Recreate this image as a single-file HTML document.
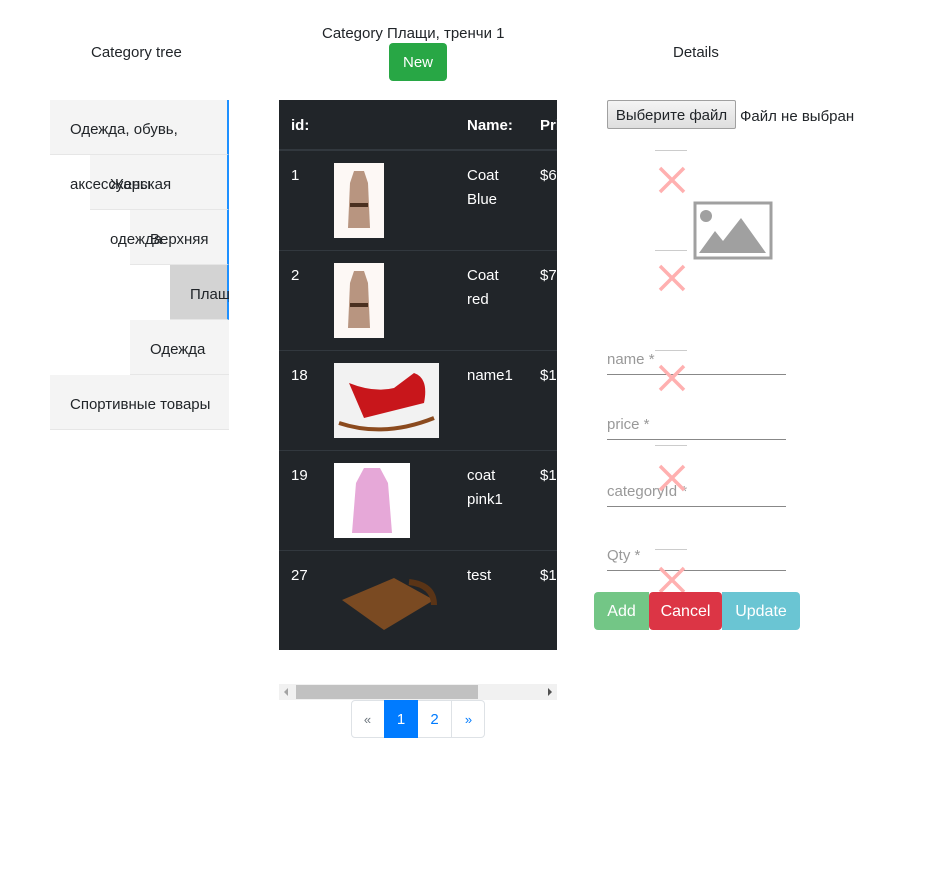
<!DOCTYPE html>
<html><head><meta charset="utf-8"><style>
*{box-sizing:border-box;margin:0;padding:0}
body{width:929px;height:888px;background:#fff;font-family:"Liberation Sans","Noto Sans CJK SC",sans-serif;color:#212529;position:relative;overflow:hidden;font-size:15px}
.a{position:absolute}
.t{position:absolute;background:#f4f4f4;border-bottom:1px solid #e6e6e6;height:55px;right:700px}
.txt{position:absolute;font-size:15px;white-space:nowrap}
.w{color:#fff;font-size:15px;position:absolute;line-height:24px}
.ln{position:absolute;left:655px;width:32px;height:1px;background:#ccc}
.inp{position:absolute;left:607px;width:179px;border-bottom:1px solid #888;color:#999;font-size:15px;height:26px;padding-top:2px}
</style></head><body>
<div class="txt" style="left:91px;top:44px">Category tree</div>
<div class="txt" style="left:322px;top:25px">Category Плащи, тренчи 1</div>
<div class="a" style="left:389px;top:43px;width:58px;height:38px;background:#28a745;border-radius:4px;color:#fff;text-align:center;line-height:40px;font-size:15px">New</div>
<div class="txt" style="left:673px;top:44px">Details</div>

<div class="t" style="left:50px;top:100px;border-right:2px solid #1e90ff"></div>
<div class="t" style="left:90px;top:155px;border-right:2px solid #1e90ff"></div>
<div class="t" style="left:130px;top:210px;border-right:2px solid #1e90ff"></div>
<div class="t" style="left:170px;top:265px;background:#d3d3d3;border-right:2px solid #1e90ff"></div>
<div class="t" style="left:130px;top:320px"></div>
<div class="t" style="left:50px;top:375px"></div>
<div class="a" style="left:50px;top:100px;width:179px;height:330px;overflow:hidden">
<div class="txt" style="left:20px;top:21px">Одежда, обувь,</div>
<div class="txt" style="left:20px;top:76px">аксессуары</div>
<div class="txt" style="left:60px;top:76px">Женская</div>
<div class="txt" style="left:60px;top:131px">одежда</div>
<div class="txt" style="left:100px;top:131px">Верхняя</div>
<div class="txt" style="left:140px;top:186px">Плащи</div>
<div class="txt" style="left:100px;top:241px">Одежда</div>
<div class="txt" style="left:20px;top:296px">Спортивные товары</div>
</div>

<div class="a" style="left:279px;top:100px;width:278px;height:550px;background:#212529;overflow:hidden">
<div class="w" style="left:12px;top:14px;font-weight:bold">id:</div>
<div class="w" style="left:188px;top:14px;font-weight:bold">Name:</div>
<div class="w" style="left:261px;top:14px;font-weight:bold">Price</div>
<div class="a" style="left:0;top:49px;width:278px;height:2px;background:#32383e"></div>
<div class="a" style="left:0;top:150px;width:278px;height:1px;background:#32383e"></div>
<div class="a" style="left:0;top:250px;width:278px;height:1px;background:#32383e"></div>
<div class="a" style="left:0;top:350px;width:278px;height:1px;background:#32383e"></div>
<div class="a" style="left:0;top:450px;width:278px;height:1px;background:#32383e"></div>

<div class="w" style="left:12px;top:64px">1</div>
<div class="a" style="left:55px;top:63px;width:50px;height:75px;background:#fdf8f5"><svg width="50" height="75"><path d="M20 8 L30 8 L34 20 L36 65 L14 65 L16 20Z" fill="#b89580"/><rect x="16" y="40" width="18" height="4" fill="#4a3020"/></svg></div>
<div class="w" style="left:188px;top:64px">Coat<br>Blue</div>
<div class="w" style="left:261px;top:64px">$6</div>

<div class="w" style="left:12px;top:164px">2</div>
<div class="a" style="left:55px;top:163px;width:50px;height:75px;background:#fdf8f5"><svg width="50" height="75"><path d="M20 8 L30 8 L34 20 L36 65 L14 65 L16 20Z" fill="#b89580"/><rect x="16" y="40" width="18" height="4" fill="#4a3020"/></svg></div>
<div class="w" style="left:188px;top:164px">Coat<br>red</div>
<div class="w" style="left:261px;top:164px">$7</div>

<div class="w" style="left:12px;top:264px">18</div>
<div class="a" style="left:55px;top:263px;width:105px;height:75px;background:#f2f2f2"><svg width="105" height="75"><path d="M15 20 Q40 30 60 25 L80 10 Q95 15 90 40 L30 55 Z" fill="#c8161b"/><path d="M5 60 Q50 75 100 55" stroke="#8b4a1e" stroke-width="4" fill="none"/></svg></div>
<div class="w" style="left:188px;top:264px">name1</div>
<div class="w" style="left:261px;top:264px">$1</div>

<div class="w" style="left:12px;top:364px">19</div>
<div class="a" style="left:55px;top:363px;width:76px;height:75px;background:#fff"><svg width="76" height="75"><path d="M30 5 L46 5 L54 20 L58 70 L18 70 L22 20Z" fill="#e6a8d8"/></svg></div>
<div class="w" style="left:188px;top:364px">coat<br>pink1</div>
<div class="w" style="left:261px;top:364px">$1</div>

<div class="w" style="left:12px;top:464px">27</div>
<div class="a" style="left:55px;top:470px;width:105px;height:70px"><svg width="105" height="70"><path d="M8 30 L60 8 L100 30 L50 60Z" fill="#7a4a22"/><path d="M75 12 Q100 15 100 35" stroke="#5a3416" stroke-width="6" fill="none"/></svg></div>
<div class="w" style="left:188px;top:464px">test</div>
<div class="w" style="left:261px;top:464px">$1</div>
</div>

<div class="a" style="left:279px;top:684px;width:278px;height:16px;background:#f1f1f1"></div>
<div class="a" style="left:296px;top:685px;width:182px;height:14px;background:#c1c1c1"></div>
<div class="a" style="left:284px;top:688px;width:0;height:0;border:4px solid transparent;border-right:4px solid #a3a3a3;border-left:0"></div>
<div class="a" style="left:548px;top:688px;width:0;height:0;border:4px solid transparent;border-left:4px solid #505050;border-right:0"></div>

<div class="a" style="left:351px;top:700px;width:134px;height:38px;border:1px solid #dee2e6;border-radius:4px"></div>
<div class="a" style="left:384px;top:700px;width:34px;height:38px;background:#007bff;color:#fff;text-align:center;line-height:40px">1</div>
<div class="a" style="left:351px;top:700px;width:33px;height:38px;color:#6c757d;text-align:center;line-height:40px;font-size:13px">«</div>
<div class="a" style="left:418px;top:700px;width:34px;height:38px;color:#007bff;text-align:center;line-height:40px;border-right:1px solid #dee2e6">2</div>
<div class="a" style="left:452px;top:700px;width:33px;height:38px;color:#007bff;text-align:center;line-height:40px;font-size:13px">»</div>

<div class="a" style="left:607px;top:100px;width:129px;height:29px;border:1px solid #a0a0a0;border-radius:2px;background:linear-gradient(#f4f4f4,#dedede);font-size:15px;text-align:center;line-height:30px">Выберите файл</div>
<div class="txt" style="left:740px;top:108px">Файл не выбран</div>

<svg class="a" style="left:693px;top:201px" width="80" height="59"><rect x="2" y="2" width="76" height="55" fill="none" stroke="#a0a0a0" stroke-width="3"/><circle cx="13" cy="15" r="6" fill="#a0a0a0"/><path d="M6 52 L22 30 L30 40 L48 17 L73 52Z" fill="#a0a0a0"/></svg>

<div class="inp" style="top:349px">name *</div>
<div class="inp" style="top:414px">price *</div>
<div class="inp" style="top:481px">categoryId *</div>
<div class="inp" style="top:545px">Qty *</div>

<div class="ln" style="top:150px"></div><div class="ln" style="top:250px"></div><div class="ln" style="top:350px"></div><div class="ln" style="top:445px"></div><div class="ln" style="top:549px"></div>
<svg class="a" style="left:658px;top:166px" width="28" height="440">
<g stroke="#ffb0b0" stroke-width="3.5">
<path d="M2 2 L26 26 M26 2 L2 26"/>
<path d="M2 100 L26 124 M26 100 L2 124"/>
<path d="M2 200 L26 224 M26 200 L2 224"/>
<path d="M2 300 L26 324 M26 300 L2 324"/>
<path d="M2 402 L26 426 M26 402 L2 426"/>
</g></svg>

<div class="a" style="left:594px;top:592px;width:55px;height:38px;background:#73c686;border-radius:4px 0 0 4px;color:#fff;text-align:center;line-height:40px;font-size:16px">Add</div>
<div class="a" style="left:649px;top:592px;width:73px;height:38px;background:#dc3545;border-radius:4px;color:#fff;text-align:center;line-height:40px;font-size:16px">Cancel</div>
<div class="a" style="left:722px;top:592px;width:78px;height:38px;background:#6ac5d3;border-radius:0 4px 4px 0;color:#fff;text-align:center;line-height:40px;font-size:16px">Update</div>
</body></html>
